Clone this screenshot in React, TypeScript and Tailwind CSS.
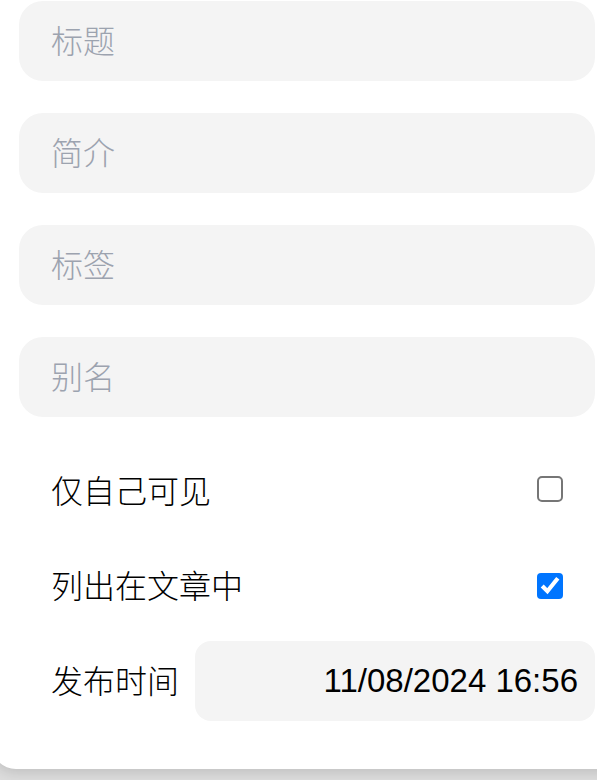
import React, { useState } from 'react';

const cjk = "font-['Noto_Sans_CJK_SC','Noto_Sans',sans-serif] font-light";

const fields = ['标题', '简介', '标签', '别名'];

export default function App() {
  const [privateOnly, setPrivateOnly] = useState(false);
  const [listed, setListed] = useState(true);

  return (
    <div className="min-h-screen w-full overflow-hidden bg-[#dcdcdc]">
      <div className="-ml-[8px] w-[640px] rounded-b-3xl bg-white pb-12 pl-[27px] pt-px shadow-[0_4px_12px_rgba(0,0,0,0.12)]">
        <div className="w-[576px]">
          <div className="flex flex-col gap-8">
            {fields.map((f) => (
              <input
                key={f}
                placeholder={f}
                className={`${cjk} h-20 w-full rounded-3xl bg-[#f4f4f4] px-8 pb-[5px] text-[32px] text-black outline-none placeholder:text-[#9ca3af]`}
              />
            ))}
          </div>

          <div className="mt-[34px] flex flex-col gap-[15px]">
            <label className="flex h-20 items-center justify-between px-8">
              <span className={`${cjk} -mt-[5px] text-[32px] text-black`}>仅自己可见</span>
              <input
                type="checkbox"
                checked={privateOnly}
                onChange={(e) => setPrivateOnly(e.target.checked)}
                className="m-0 h-[13px] w-[13px] -translate-y-[1px] [zoom:2]"
              />
            </label>
            <label className="flex h-20 items-center justify-between px-8">
              <span className={`${cjk} -mt-[5px] text-[32px] text-black`}>列出在文章中</span>
              <input
                type="checkbox"
                checked={listed}
                onChange={(e) => setListed(e.target.checked)}
                className="m-0 h-[13px] w-[13px] [zoom:2]"
              />
            </label>
            <div className="flex h-20 items-center gap-4 pl-8">
              <span className={`${cjk} -mt-[4px] shrink-0 text-[32px] text-black`}>发布时间</span>
              <input
                defaultValue="11/08/2024 16:56"
                className="h-20 min-w-0 flex-1 rounded-2xl bg-[#f4f4f4] pr-[17px] text-right font-['Liberation_Sans',Arial,sans-serif] text-[33px] text-black outline-none"
              />
            </div>
          </div>
        </div>
      </div>
    </div>
  );
}
